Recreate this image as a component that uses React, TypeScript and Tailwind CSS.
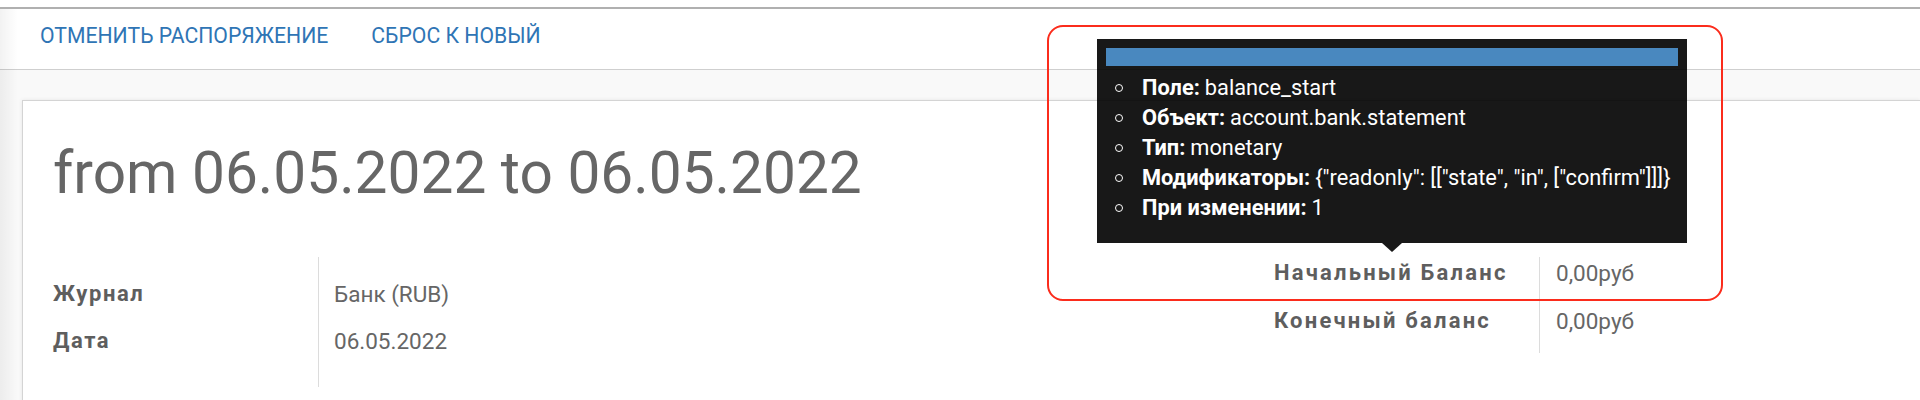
import React from 'react';

const tooltipRows: { label: string; value: string }[] = [
  { label: 'Поле:', value: 'balance_start' },
  { label: 'Объект:', value: 'account.bank.statement' },
  { label: 'Тип:', value: 'monetary' },
  { label: 'Модификаторы:', value: '{"readonly": [["state", "in", ["confirm"]]]}' },
  { label: 'При изменении:', value: '1' },
];

const App: React.FC = () => {
  return (
    <div className="relative w-full h-[400px] overflow-hidden bg-white text-[#666] font-['Roboto','Noto_Sans',sans-serif]">
      {/* top spacer + control panel */}
      <div className="h-[7px] bg-white"></div>
      <div className="h-[63px] border-t-2 border-b border-t-[#b0b0b0] border-b-[#cfcfcf] bg-white flex items-start pt-[11px] pl-[40px] gap-[43px]">
        <button className="text-[21.2px] leading-[32px] uppercase text-[#2f75b5]">Отменить распоряжение</button>
        <button className="text-[21.2px] leading-[32px] uppercase text-[#2f75b5]">Сброс к новый</button>
      </div>

      {/* sheet background */}
      <div className="bg-[#f9f9f9] pt-[30px]">
        <div className="ml-[22px] bg-white border-t border-l border-[#d4d4d4] shadow-[0_0_4px_rgba(0,0,0,0.08)] h-[400px] pl-[30px]">
          <h1 className="pt-[37px] text-[58.6px] leading-[1.2] text-[#666] font-normal">from 06.05.2022 to 06.05.2022</h1>

          <div className="flex mt-[49px]">
            {/* left group */}
            <div className="w-[1221px] flex">
              <div className="w-[266px] border-r border-[#dcdcdc] pt-[21px] pb-[15px]">
                <div className="h-[47px] text-[22px] leading-[32px] font-bold tracking-[1.6px] text-[#5e5e5e]">Журнал</div>
                <div className="h-[47px] text-[22px] leading-[32px] font-bold tracking-[1.6px] text-[#5e5e5e]">Дата</div>
              </div>
              <div className="pl-[15px] pt-[21px]">
                <div className="h-[47px] text-[22.5px] leading-[32px] text-[#666]">Банк (RUB)</div>
                <div className="h-[47px] text-[22.5px] leading-[32px] text-[#666]">06.05.2022</div>
              </div>
            </div>

            {/* right group */}
            <div className="flex items-start">
              <div className="w-[266px] border-r border-[#dcdcdc]">
                <div className="h-[48px] text-[22px] leading-[32px] font-bold tracking-[2.2px] text-[#5e5e5e]">Начальный Баланс</div>
                <div className="h-[48px] text-[22px] leading-[32px] font-bold tracking-[2.2px] text-[#5e5e5e]">Конечный баланс</div>
              </div>
              <div className="pl-[16px]">
                <div className="h-[48px] text-[22.5px] leading-[32px] text-[#666]">0,00руб</div>
                <div className="h-[48px] text-[22.5px] leading-[32px] text-[#666]">0,00руб</div>
              </div>
            </div>
          </div>
        </div>
      </div>

      {/* left edge shade */}
      <div className="absolute left-0 top-[9px] bottom-0 w-[18px] pointer-events-none bg-gradient-to-r from-[rgba(0,0,0,0.05)] to-transparent"></div>

      {/* field tooltip */}
      <div className="absolute left-[1097px] top-[39px] opacity-90">
        <div className="relative w-[590px] h-[204px] bg-black pt-[9px] px-[9px]">
          <div className="h-[18px] bg-[#367cb9]"></div>
          <ul className="mt-[7px] pl-[9px] text-white text-[21.8px] leading-[30px] whitespace-nowrap">
            {tooltipRows.map((row) => (
              <li key={row.label} className="flex items-center">
                <span className="w-[8px] h-[8px] rounded-full border-[1.5px] border-white mr-[19px] shrink-0"></span>
                <span className="font-bold mr-[5px]">{row.label}</span>
                <span>{row.value}</span>
              </li>
            ))}
          </ul>
          <div className="absolute left-1/2 -translate-x-1/2 top-full w-0 h-0 border-l-[10px] border-r-[10px] border-t-[9px] border-l-transparent border-r-transparent border-t-black"></div>
        </div>
      </div>

      {/* annotation frame */}
      <div className="absolute left-[1047px] top-[25px] w-[676px] h-[276px] border-2 border-[#fb2c1c] rounded-[16px] pointer-events-none"></div>
    </div>
  );
};

export default App;
